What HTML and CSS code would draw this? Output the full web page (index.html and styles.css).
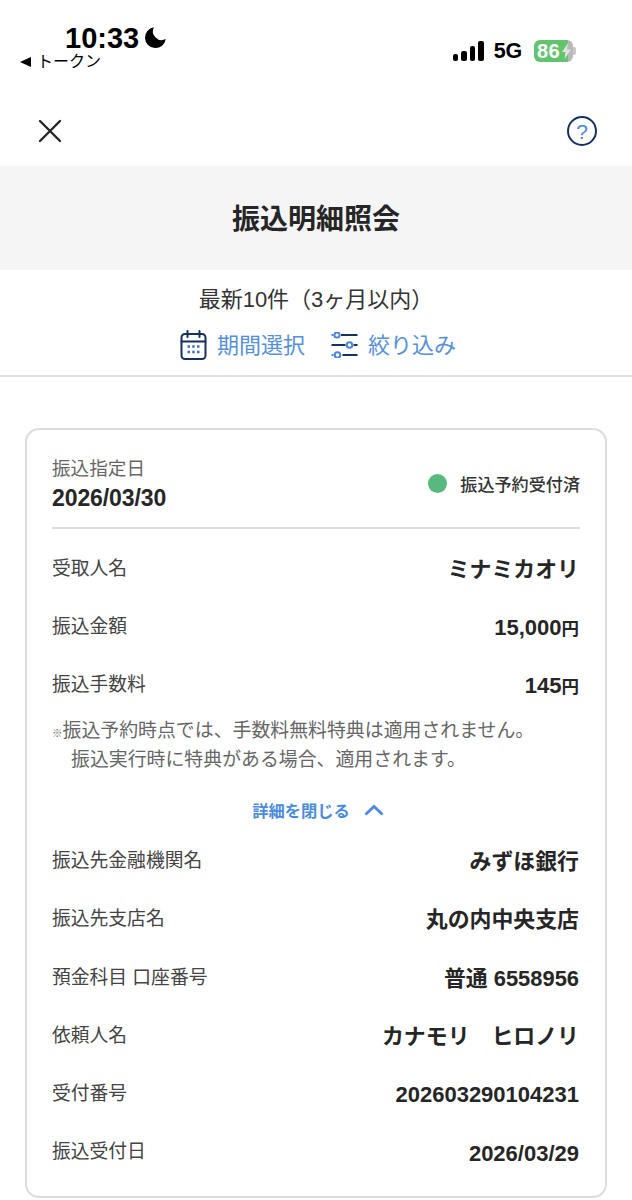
FILE: index.html
```html
<!DOCTYPE html>
<html lang="ja">
<head>
  <meta charset="UTF-8">
  <meta name="viewport" content="width=device-width, initial-scale=1.0">
  <title>振込明細照会</title>
  <link rel="stylesheet" href="styles.css">
</head>
<body>
  <div class="status">
    <div class="status-left">
      <div class="clock">10:33
        <svg class="moon" width="23" height="23" viewBox="0 0 22 22"><path d="M9.500 1.200A10 10 0 1 0 20.800 12.500 8.400 8.400 0 0 1 9.500 1.200Z" fill="#000"/></svg>
      </div>
      <div class="back"><span class="back-arrow"></span>トークン</div>
    </div>
    <div class="status-right">
      <div class="signal"><i class="s1"></i><i class="s2"></i><i class="s3"></i><i class="s4"></i></div>
      <span class="net">5G</span>
      <div class="battery"><span>86</span>
        <svg class="bolt" width="9" height="16" viewBox="0 0 9 16"><path d="M6 0 0 9h3.400L2.600 16 9 6.600H5.400Z" fill="#dfe3df"/></svg>
      </div>
      <span class="battery-tip"></span>
    </div>
  </div>

  <header class="topbar">
    <svg width="24" height="24" viewBox="0 0 24 24"><path d="M2 2 22 22M22 2 2 22" stroke="#262626" stroke-width="2.400" stroke-linecap="round"/></svg>
    <div class="help">?</div>
  </header>

  <h1 class="title">振込明細照会</h1>

  <section class="filter">
    <p class="range">最新10件（3ヶ月以内）</p>
    <div class="filter-links">
      <a class="filter-link">
        <svg width="27" height="30" viewBox="0 0 27 30" fill="none" stroke="#14315f" stroke-width="2"><rect x="1.500" y="4" width="24" height="25" rx="3.500"/><path d="M1.500 11.500H25.500M7.500 1V7M19.500 1V7" stroke-linecap="round"/><path d="M7.500 16.500h2.500M12.200 16.500h2.500M17 16.500h2.500M7.500 22h2.500M12.200 22h2.500M17 22h2.500" stroke="#3f6fb5" stroke-width="2.600"/></svg>
        <span>期間選択</span>
      </a>
      <a class="filter-link">
        <svg width="27" height="26" viewBox="0 0 27 26" fill="none" stroke="#14315f" stroke-width="2"><path d="M10 3H26.500M.500 13H14.500M22.500 13H26.500M11.500 23H26.500"/><path d="M.500 3H2.500M.500 23H2.500" stroke="#4a86d8"/><circle cx="6" cy="3" r="2.600" stroke="#4a86d8"/><circle cx="18.500" cy="13" r="2.800" stroke="#4a86d8"/><circle cx="6.500" cy="23" r="2.800" stroke="#4a86d8"/></svg>
        <span>絞り込み</span>
      </a>
    </div>
  </section>

  <main class="card">
    <div class="card-head">
      <div>
        <div class="date-label">振込指定日</div>
        <div class="date-value">2026/03/30</div>
      </div>
      <div class="state"><span class="dot"></span>振込予約受付済</div>
    </div>

    <div class="row"><span class="row-label">受取人名</span><span class="row-value">ミナミカオリ</span></div>
    <div class="row"><span class="row-label">振込金額</span><span class="row-value num">15,000<small>円</small></span></div>
    <div class="row"><span class="row-label">振込手数料</span><span class="row-value num">145<small>円</small></span></div>

    <p class="note"><span class="mark">※</span>振込予約時点では、手数料無料特典は適用されません。<br><span class="indent">振込実行時に特典がある場合、適用されます。</span></p>

    <div class="toggle">詳細を閉じる
      <svg width="20" height="12" viewBox="0 0 20 12" fill="none"><path d="M1.500 10.500 10 2.500 18.500 10.500" stroke="#4a8be0" stroke-width="2.800"/></svg>
    </div>

    <div class="row"><span class="row-label">振込先金融機関名</span><span class="row-value">みずほ銀行</span></div>
    <div class="row"><span class="row-label">振込先支店名</span><span class="row-value">丸の内中央支店</span></div>
    <div class="row"><span class="row-label">預金科目 口座番号</span><span class="row-value">普通 6558956</span></div>
    <div class="row"><span class="row-label">依頼人名</span><span class="row-value">カナモリ　ヒロノリ</span></div>
    <div class="row"><span class="row-label">受付番号</span><span class="row-value num">202603290104231</span></div>
    <div class="row"><span class="row-label">振込受付日</span><span class="row-value num">2026/03/29</span></div>
  </main>
</body>
</html>
```

FILE: styles.css
```css
* { box-sizing:border-box; }
html, body { height:1200px; overflow:hidden; }
body { margin:0; background:#fff; color:#262626; font-family:"Liberation Sans","Noto Sans CJK JP",sans-serif; }

/* status bar */
.status { height:100px; display:flex; justify-content:space-between; padding:24px 56px 0 20px; color:#000; }
.clock { margin-left:45px; height:28px; display:flex; align-items:center; gap:5px; font-size:29px; font-weight:700; line-height:28px; }
.moon { margin-top:-2px; }
.back { display:flex; align-items:center; gap:6px; height:18px; font-size:16px; line-height:18px; margin-top:1px; }
.back-arrow { width:0; height:0; border-style:solid; border-width:5px 11px 5px 0; border-color:transparent #000 transparent transparent; }
.status-right { display:flex; align-items:center; height:20px; margin-top:17px; }
.signal { display:flex; align-items:flex-end; gap:3px; height:20px; }
.signal i { width:5.500px; background:#000; border-radius:2px; }
.s1 { height:7px; } .s2 { height:10px; } .s3 { height:15px; } .s4 { height:20px; }
.net { margin-left:10px; font-size:21.500px; font-weight:700; letter-spacing:-.2px; }
.battery { position:relative; margin-left:12px; width:39px; height:22px; border-radius:6px; display:flex; align-items:center; padding-left:3px; color:#fff; font-size:20px; font-weight:700; letter-spacing:.5px; background:linear-gradient(90deg,#62c46f 86%,#b9b9b9 86%); }
.bolt { position:absolute; right:2px; top:3px; }
.battery-tip { width:3px; height:8px; border-radius:0 2px 2px 0; background:#c8c8c8; }

/* top bar */
.topbar { height:66px; display:flex; align-items:center; justify-content:space-between; padding:0 35px 4px 38px; }
.help { width:30px; height:30px; border:2px solid #14315f; border-radius:50%; display:flex; align-items:center; justify-content:center; color:#4a86d8; font-size:21px; line-height:1; }

.title { margin:0; height:104px; padding-bottom:3px; background:#f5f5f5; display:flex; align-items:center; justify-content:center; font-size:28px; font-weight:700; color:#262626; }

/* range and filters */
.filter { height:107px; border-bottom:2px solid #e2e2e2; padding-top:17px; text-align:center; }
.range { margin:0; font-size:22px; line-height:26px; color:#333; }
.filter-links { display:flex; justify-content:center; gap:26px; margin-top:17px; padding-left:4px; }
.filter-link { display:flex; align-items:center; gap:10px; height:30px; font-size:22px; color:#5590dc; }
.filter-link span { margin-top:-5px; }

/* card */
.card { margin:51px 25px 0 25px; height:770px; padding:22px 25px 0; border:2px solid #dcdcdc; border-radius:14px; }
.card-head { height:77px; display:flex; justify-content:space-between; align-items:center; border-bottom:2px solid #dedede; padding-bottom:12px; }
.date-label { font-size:18.600px; line-height:24px; color:#666; }
.date-value { margin-top:5px; font-size:23px; line-height:24px; font-weight:700; color:#262626; letter-spacing:-.1px; }
.state { display:flex; align-items:center; gap:13px; font-size:17.100px; font-weight:500; color:#333; }
.dot { width:19px; height:19px; border-radius:50%; background:#58b97c; }

.row { height:58.200px; padding-right:1px; display:flex; justify-content:space-between; align-items:center; }
.card-head + .row { margin-top:10px; }
.row-label { font-size:18.800px; color:#444; margin-top:-4px; }
.row-value { font-size:21.900px; font-weight:700; color:#262626; margin-top:-2px; }
.num { font-size:22px; margin-top:4px; }
.num small { font-size:17.500px; }

.note { margin:2px 0 0; font-size:18.900px; line-height:29px; color:#666; }
.mark { font-size:10.500px; line-height:0; }
.indent { margin-left:19px; }
.toggle { height:58px; display:flex; align-items:center; justify-content:center; gap:14px; font-size:16.300px; font-weight:700; color:#4a8be0; padding:14px 0 0 4px; }
```
